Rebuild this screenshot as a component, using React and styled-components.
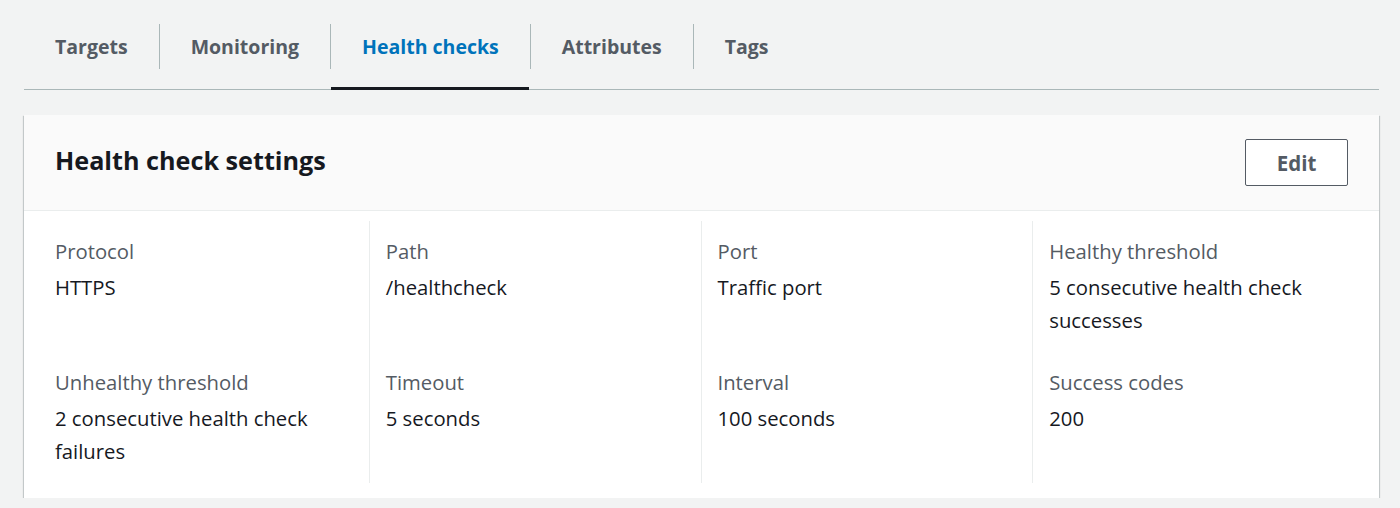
import React from 'react';
import styled, { createGlobalStyle } from 'styled-components';

const GlobalStyle = createGlobalStyle`
  html, body {
    margin: 0;
    padding: 0;
    background: #f2f3f3;
  }
  body {
    font-family: "Open Sans", "Noto Sans", sans-serif;
    color: #16191f;
  }
`;

const Page = styled.div`
  padding: 0 21px 0 24px;
`;

const TabBar = styled.ul`
  display: flex;
  margin: 0;
  padding: 0;
  list-style: none;
  border-bottom: 1px solid #aab7b8;
`;

const TabItem = styled.li`
  position: relative;
  padding: 24px 0 20px;

  &::after {
    content: '';
    display: ${props => (props.active ? 'block' : 'none')};
    position: absolute;
    left: 1px;
    right: 1px;
    bottom: -1px;
    height: 3px;
    background: #16191f;
  }
`;

const TabLabel = styled.span`
  display: block;
  padding: 0 31px;
  border-left: ${props => (props.first ? 'none' : '1px solid #aab7b8')};
  line-height: 45px;
  font-size: 19.5px;
  font-weight: 700;
  color: ${props => (props.active ? '#0073bb' : '#545b64')};
  cursor: pointer;
`;

const Card = styled.section`
  margin-top: 25px;
  background: #ffffff;
  box-shadow: 0 1px 1px 0 rgba(0, 28, 36, 0.3), 1px 1px 1px 0 rgba(0, 28, 36, 0.15),
    -1px 1px 1px 0 rgba(0, 28, 36, 0.15);
`;

const CardHeader = styled.header`
  display: flex;
  align-items: center;
  justify-content: space-between;
  height: 96px;
  padding: 0 31px;
  box-sizing: border-box;
  background: #fafafa;
  border-bottom: 1px solid #eaeded;
`;

const Title = styled.h2`
  margin: 0 0 6px;
  font-size: 25.2px;
  font-weight: 700;
  color: #16191f;
`;

const EditButton = styled.button`
  width: 103px;
  height: 47px;
  padding: 0;
  background: #ffffff;
  border: 1px solid #545b64;
  border-radius: 2px;
  font-family: inherit;
  font-size: 20.5px;
  font-weight: 700;
  color: #545b64;
  cursor: pointer;
`;

const CardBody = styled.div`
  display: grid;
  grid-template-columns: repeat(4, 1fr);
  padding: 10px 15px 15px 13px;
`;

const Cell = styled.div`
  padding: 14px 17px 15px ${props => (props.divider ? '16px' : '18px')};
  border-left: ${props => (props.divider ? '1px solid #eaeded' : 'none')};
`;

const Label = styled.div`
  font-size: 20.3px;
  line-height: 33px;
  color: #545b64;
  margin-bottom: 3px;
`;

const Value = styled.div`
  font-size: 20.3px;
  line-height: 33px;
  color: #16191f;
`;

const tabs = ['Targets', 'Monitoring', 'Health checks', 'Attributes', 'Tags'];

const settings = [
  ['Protocol', 'HTTPS'],
  ['Path', '/healthcheck'],
  ['Port', 'Traffic port'],
  ['Healthy threshold', '5 consecutive health check successes'],
  ['Unhealthy threshold', '2 consecutive health check failures'],
  ['Timeout', '5 seconds'],
  ['Interval', '100 seconds'],
  ['Success codes', '200'],
];

export default function App() {
  return (
    <Page>
      <GlobalStyle />
      <TabBar>
        {tabs.map((t, i) => (
          <TabItem key={t} active={t === 'Health checks'}>
            <TabLabel first={i === 0} active={t === 'Health checks'}>
              {t}
            </TabLabel>
          </TabItem>
        ))}
      </TabBar>
      <Card>
        <CardHeader>
          <Title>Health check settings</Title>
          <EditButton>Edit</EditButton>
        </CardHeader>
        <CardBody>
          {settings.map(([label, value], i) => (
            <Cell key={label} divider={i % 4 !== 0}>
              <Label>{label}</Label>
              <Value>{value}</Value>
            </Cell>
          ))}
        </CardBody>
      </Card>
    </Page>
  );
}
